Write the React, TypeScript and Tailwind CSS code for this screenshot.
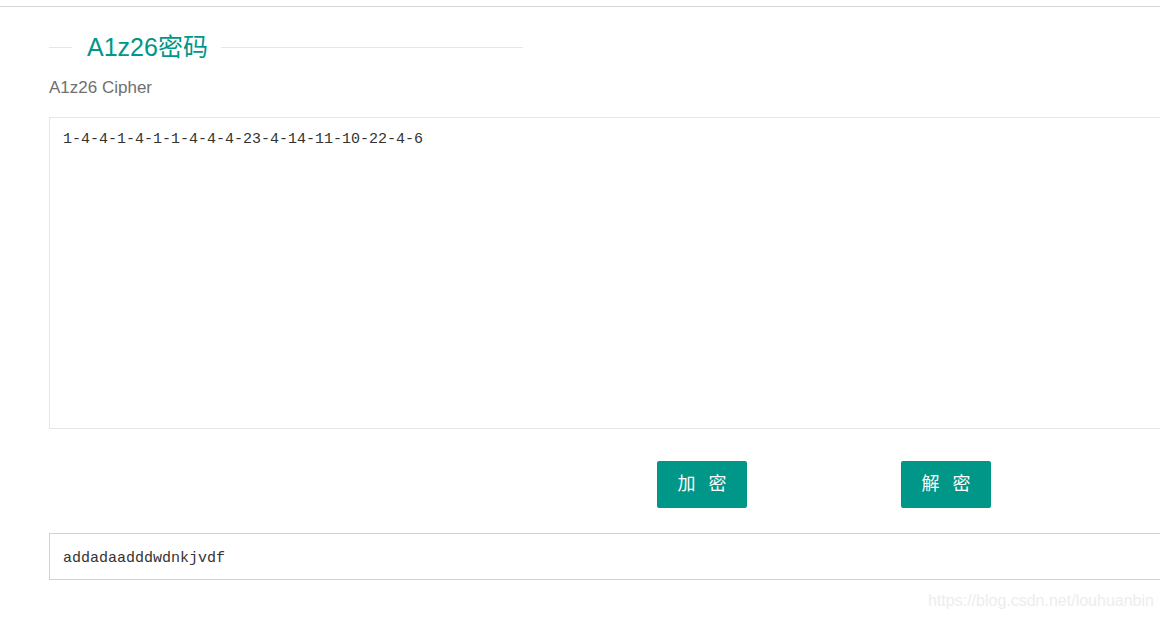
import React, { useState } from 'react';

const encode = (s: string) =>
  s
    .toLowerCase()
    .split('')
    .filter(c => c >= 'a' && c <= 'z')
    .map(c => c.charCodeAt(0) - 96)
    .join('-');

const decode = (s: string) =>
  s
    .split(/[^0-9]+/)
    .filter(Boolean)
    .map(n => String.fromCharCode(96 + parseInt(n, 10)))
    .join('');

export default function App() {
  const [input, setInput] = useState('1-4-4-1-4-1-1-4-4-4-23-4-14-11-10-22-4-6');
  const [output, setOutput] = useState('addadaadddwdnkjvdf');

  return (
    <div
      className="relative w-[1160px] h-[618px] overflow-hidden bg-white"
      style={{ fontFamily: '"Liberation Sans", "Noto Sans CJK SC", sans-serif' }}
    >
      <div className="mt-[6px] border-t border-[#d6d6d6]" />

      <div className="pl-[49px]">
        {/* Title */}
        <div className="mt-[23px] flex items-center w-[474px] h-[34px]">
          <div className="w-[23px] h-px bg-[#e6e6e6]" />
          <h1 className="pl-[15px] pr-[13px] text-[25px] leading-[34px] text-[#009688] font-normal">A1z26密码</h1>
          <div className="flex-1 h-px bg-[#e6e6e6]" />
        </div>

        <p className="mt-[14px] text-[17px] leading-[20px] text-[#6f6f6f]">A1z26 Cipher</p>

        {/* Input area */}
        <textarea
          value={input}
          onChange={e => setInput(e.target.value)}
          spellCheck={false}
          className="mt-[19px] block w-[1200px] h-[312px] resize-none border border-[#e6e6e6] px-[13px] pt-[12px] pb-[10px] text-[15px] leading-[20px] text-[#333] outline-none"
          style={{ fontFamily: '"Liberation Mono", "Noto Sans CJK SC", monospace' }}
        />

        {/* Actions */}
        <div className="mt-[32px] flex gap-[154px] pl-[608px]">
          <button
            onClick={() => setOutput(encode(input))}
            className="w-[90px] h-[47px] rounded-[2px] bg-[#009688] text-white text-[18px] tracking-[4px] pl-[4px]"
          >
            加 密
          </button>
          <button
            onClick={() => setOutput(decode(input))}
            className="w-[90px] h-[47px] rounded-[2px] bg-[#009688] text-white text-[18px] tracking-[4px] pl-[4px]"
          >
            解 密
          </button>
        </div>

        {/* Result */}
        <input
          value={output}
          onChange={e => setOutput(e.target.value)}
          className="mt-[25px] block w-[1200px] h-[47px] border border-[#d2d2d2] px-[13px] pt-[3px] text-[15px] text-[#333] outline-none"
          style={{ fontFamily: '"Liberation Mono", "Noto Sans CJK SC", monospace' }}
        />
      </div>

      {/* watermark */}
      <span className="absolute left-[928px] top-[589px] text-[16px] text-[#ededed] pointer-events-none">
        https://blog.csdn.net/louhuanbin
      </span>
    </div>
  );
}
